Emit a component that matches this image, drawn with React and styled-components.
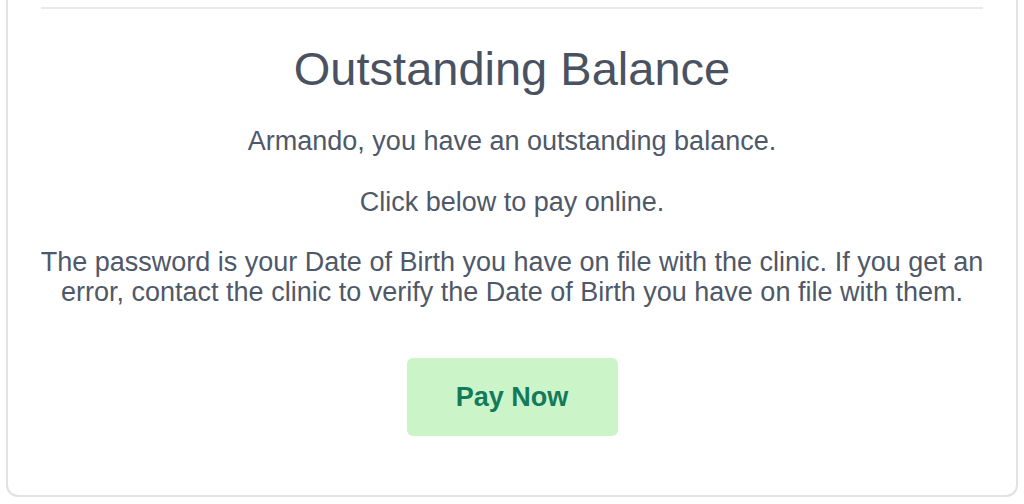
import React from "react"
import styled, { createGlobalStyle } from "styled-components"

const GlobalStyle = createGlobalStyle`
  html, body {
    margin: 0;
    padding: 0;
    background: #ffffff;
  }
  body {
    font-family: "Liberation Sans", Arial, sans-serif;
  }
`

const Page = styled.div`
  padding: 0 6px 0 6px;
  height: 504px;
  box-sizing: border-box;
`

const Card = styled.section`
  box-sizing: border-box;
  width: 1012px;
  height: 497px;
  border: 2px solid #e2e2e2;
  border-top: none;
  border-radius: 0 0 12px 12px;
  padding: 7px 30px 0;
  display: flex;
  flex-direction: column;
  align-items: center;
  background: #ffffff;
`

const Divider = styled.hr`
  width: calc(100% - 6px);
  margin: 0;
  border: none;
  border-top: 2px solid #e8eaee;
`

const Title = styled.h1`
  margin: 32px 0 0;
  font-size: 47px;
  line-height: 56px;
  font-weight: 400;
  color: #4a5262;
  text-align: center;
`

const Text = styled.p`
  margin: ${(p) => p.$top}px 0 0;
  font-size: 27px;
  line-height: 30px;
  color: #4f5868;
  text-align: center;
`

const PayButton = styled.button`
  margin-top: 51px;
  width: 211px;
  height: 78px;
  border: none;
  border-radius: 6px;
  background: #ccf4c9;
  color: #137a5c;
  font-family: "Liberation Sans", Arial, sans-serif;
  font-size: 27px;
  font-weight: 700;
  cursor: pointer;
`

export default function App() {
  return (
    <>
      <GlobalStyle />
      <Page>
        <Card>
          <Divider />
          <Title>Outstanding Balance</Title>
          <Text $top={29}>Armando, you have an outstanding balance.</Text>
          <Text $top={31}>Click below to pay online.</Text>
          <Text $top={30}>
            The password is your Date of Birth you have on file with the clinic. If you get an
            error, contact the clinic to verify the Date of Birth you have on file with them.
          </Text>
          <PayButton>Pay Now</PayButton>
        </Card>
      </Page>
    </>
  )
}
